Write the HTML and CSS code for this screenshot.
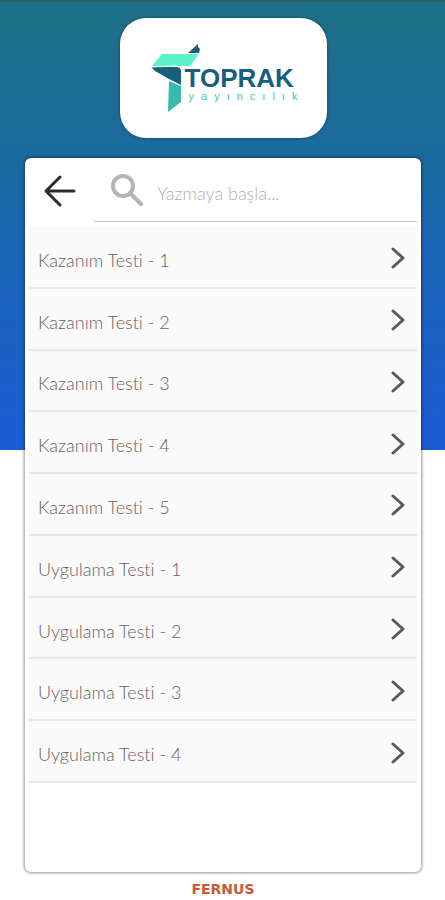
FILE: index.html
```html
<!DOCTYPE html>
<html lang="tr">
<head>
<meta charset="utf-8">
<meta name="viewport" content="width=device-width, initial-scale=1">
<title>Toprak Yayıncılık</title>
<link rel="stylesheet" href="styles.css">
</head>
<body>
<div class="page">
  <header class="brand">
    <svg class="brand-mark" viewBox="0 0 50 70" width="50" height="70" aria-hidden="true">
      <path fill="#175f7c" d="M37 10 47 1v3l2 2-1 4z"/>
      <path fill="#5df2cc" d="M11 11h37l-9 12H1z"/>
      <path fill="#175f7c" d="M0 24h28l2 3v15l-12-6L4 28z"/>
      <path fill="#35bcae" d="M18 38l12 5v16L17 69z"/>
      <path fill="none" stroke="#fff" d="M0 24l25-1 5 2"/>
    </svg>
    <div class="brand-text">
      <span class="brand-name">TOPRAK</span>
      <span class="brand-sub">yayıncılık</span>
    </div>
  </header>

  <main class="panel">
    <div class="toolbar">
      <button class="back" type="button" aria-label="Geri">
        <svg viewBox="0 0 34 34" width="34" height="34" aria-hidden="true"><path d="M17 3 3 17l14 14M3 17h28"/></svg>
      </button>
      <label class="search">
        <svg viewBox="0 0 34 34" width="34" height="34" aria-hidden="true"><circle cx="13" cy="13" r="10"/><path d="m20 20 11 11"/></svg>
        <input type="text" placeholder="Yazmaya başla..." aria-label="Ara">
      </label>
    </div>
    <nav class="tests">
      <a href="#">Kazanım Testi - 1<svg viewBox="0 0 14 22" aria-hidden="true"><path d="m2 2 10 9-10 9"/></svg></a>
      <a href="#">Kazanım Testi - 2<svg viewBox="0 0 14 22" aria-hidden="true"><path d="m2 2 10 9-10 9"/></svg></a>
      <a href="#">Kazanım Testi - 3<svg viewBox="0 0 14 22" aria-hidden="true"><path d="m2 2 10 9-10 9"/></svg></a>
      <a href="#">Kazanım Testi - 4<svg viewBox="0 0 14 22" aria-hidden="true"><path d="m2 2 10 9-10 9"/></svg></a>
      <a href="#">Kazanım Testi - 5<svg viewBox="0 0 14 22" aria-hidden="true"><path d="m2 2 10 9-10 9"/></svg></a>
      <a href="#">Uygulama Testi - 1<svg viewBox="0 0 14 22" aria-hidden="true"><path d="m2 2 10 9-10 9"/></svg></a>
      <a href="#">Uygulama Testi - 2<svg viewBox="0 0 14 22" aria-hidden="true"><path d="m2 2 10 9-10 9"/></svg></a>
      <a href="#">Uygulama Testi - 3<svg viewBox="0 0 14 22" aria-hidden="true"><path d="m2 2 10 9-10 9"/></svg></a>
      <a href="#">Uygulama Testi - 4<svg viewBox="0 0 14 22" aria-hidden="true"><path d="m2 2 10 9-10 9"/></svg></a>
    </nav>
  </main>

  <footer class="maker">FERNUS</footer>
</div>
</body>
</html>
```
FILE: styles.css
```css
* {
  box-sizing: border-box;
}

body {
  margin: 0;
  background: #fefefe;
  font-family: Lato, "Liberation Sans", sans-serif;
  font-variant-ligatures: none;
}

.page {
  display: flex;
  flex-direction: column;
  align-items: center;
  min-height: 100vh;
  padding: 16px 24px 0 25px;
  border-top: 2px solid #2b5a68;
  background: linear-gradient(#1e7085, #1b6a9c 33%, #1b63b8 60%, #1c5bd5) top / 100% 50vh no-repeat border-box;
}

.brand {
  display: flex;
  align-items: center;
  justify-content: center;
  width: 207px;
  height: 120px;
  padding-left: 2px;
  border-radius: 26px;
  background: #fff;
  box-shadow: 0 0 3px rgba(0, 30, 70, 0.6);
}

.brand-mark {
  flex: none;
}

.brand-text {
  display: flex;
  flex-direction: column;
  margin-left: -16px;
  padding-top: 10px;
  font-family: "Liberation Sans", sans-serif;
}

.brand-name {
  color: #175f7c;
  font-size: 26px;
  font-weight: bold;
  line-height: 26px;
}

.brand-sub {
  padding-left: 4px;
  margin-right: -7px;
  color: #4cc4ae;
  font-size: 11px;
  line-height: 11px;
  letter-spacing: 7px;
}

.panel {
  display: flex;
  flex: 1;
  flex-direction: column;
  align-self: stretch;
  margin-top: 20px;
  padding: 1px 4px 4px;
  border-radius: 6px;
  background: #fff;
  box-shadow: 0 0 3px 1px rgba(0, 0, 0, 0.4);
}

.toolbar {
  display: flex;
  height: 63px;
}

.back {
  width: 65px;
  padding: 0;
  border: 0;
  background: none;
}

.back svg {
  display: block;
  margin-left: 14px;
}

.search {
  display: flex;
  flex: 1;
  align-items: center;
  gap: 13px;
  min-width: 0;
  padding-left: 16px;
  border-bottom: 1px solid #c4c4c4;
}

.search svg {
  flex: none;
}

.search input {
  width: 100%;
  min-width: 0;
  padding: 6px 0 0;
  border: 0;
  outline: 0;
  background: none;
  font: 300 18px/24px Lato, sans-serif;
}

.search input::placeholder {
  color: #b0b0b0;
  opacity: 1;
}

svg path,
svg circle {
  stroke-linecap: round;
  stroke-linejoin: round;
}

.back svg {
  fill: none;
  stroke: #2c2c2c;
  stroke-width: 3;
}

.search svg {
  fill: none;
  stroke: #b4b4b4;
  stroke-width: 4;
}

.tests {
  display: grid;
  grid-auto-rows: 1fr;
  min-height: 556px;
  margin-top: 5px;
  background: #fafafa;
}

.tests a {
  display: flex;
  align-items: center;
  justify-content: space-between;
  padding: 6px 12px 0 9px;
  border-bottom: 2px solid #e8e8e8;
  color: #636363;
  font-size: 18px;
  font-weight: 300;
  line-height: 24px;
  text-decoration: none;
}

.tests svg {
  width: 14px;
  height: 22px;
  margin-bottom: 3px;
  fill: none;
  stroke: #5a5a5a;
  stroke-width: 3;
}

.maker {
  padding: 10px 0 4px;
  color: #cc5a36;
  font-family: "DejaVu Sans", sans-serif;
  font-size: 14px;
  font-weight: bold;
  line-height: 14px;
}
```
